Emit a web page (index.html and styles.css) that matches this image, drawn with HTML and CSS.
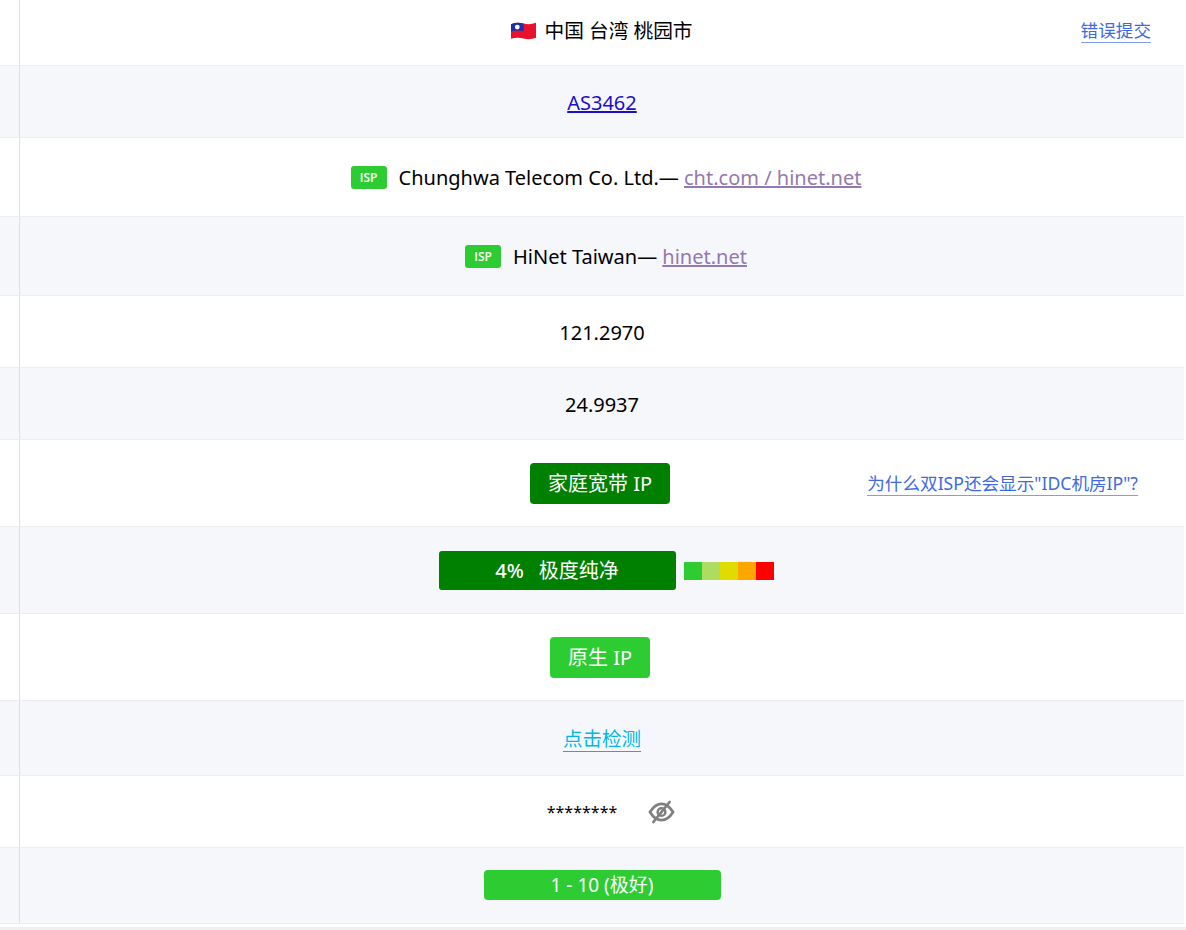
FILE: index.html
```html
<!DOCTYPE html>
<html lang="zh-CN">
<head>
<meta charset="utf-8">
<title>IP</title>
<link rel="stylesheet" href="styles.css">
</head>
<body>
<main class="table">
  <div class="row h-loc">
    <div class="label"></div>
    <div class="value lift">
      <svg class="flag" viewBox="0 0 24 18" aria-hidden="true">
        <path d="M0 2.5 C4 .8 8 .8 12 1.8 C16 2.8 20 2.6 24 1 V15.5 C20 17 16 17.2 12 16.2 C8 15.2 4 15.2 0 16.5Z" fill="#e8112d"/>
        <path d="M0 2.5 C4 .8 8 .8 12 1.8 V9.2 C8 8.4 4 8.4 0 9.5Z" fill="#1f2fa8"/>
        <circle cx="6" cy="5.2" r="2.3" fill="#fff"/>
      </svg>
      <span class="loc">中国 台湾 桃园市</span>
      <a class="side side-report" href="#">错误提交</a>
    </div>
  </div>
  <div class="row alt h-asn">
    <div class="label"></div>
    <div class="value drop"><a class="asn" href="#">AS3462</a></div>
  </div>
  <div class="row h-isp">
    <div class="label"></div>
    <div class="value shift"><span class="tag">ISP</span><span>Chunghwa Telecom Co. Ltd.— <a class="visited" href="#">cht.com / hinet.net</a></span></div>
  </div>
  <div class="row alt h-isp">
    <div class="label"></div>
    <div class="value shift"><span class="tag">ISP</span><span>HiNet Taiwan— <a class="visited" href="#">hinet.net</a></span></div>
  </div>
  <div class="row h-asn">
    <div class="label"></div>
    <div class="value drop">121.2970</div>
  </div>
  <div class="row alt h-asn">
    <div class="label"></div>
    <div class="value drop">24.9937</div>
  </div>
  <div class="row h-badge">
    <div class="label"></div>
    <div class="value nudge">
      <span class="badge dark">家庭宽带 IP</span>
      <a class="side side-why" href="#">为什么双ISP还会显示"IDC机房IP"?</a>
    </div>
  </div>
  <div class="row alt h-badge">
    <div class="label"></div>
    <div class="value shift">
      <span class="score"><b>4%</b><span>极度纯净</span></span>
      <span class="scale"><i class="s1"></i><i class="s2"></i><i class="s3"></i><i class="s4"></i><i class="s5"></i></span>
    </div>
  </div>
  <div class="row h-badge">
    <div class="label"></div>
    <div class="value nudge"><span class="badge light">原生 IP</span></div>
  </div>
  <div class="row alt h-check">
    <div class="label"></div>
    <div class="value"><a class="check" href="#">点击检测</a></div>
  </div>
  <div class="row h-asn">
    <div class="label"></div>
    <div class="value pad-eye">
      <span class="stars">********</span>
      <svg class="eye" viewBox="0 0 28 24" aria-hidden="true">
        <path d="M2 12 C6 5.5 10 3.5 14 3.5 C18 3.5 22 5.5 26 12 C22 18.5 18 20.5 14 20.5 C10 20.5 6 18.5 2 12Z" fill="none" stroke="#808080" stroke-width="2.8"/>
        <circle cx="14" cy="12" r="4" fill="none" stroke="#808080" stroke-width="2.6"/>
        <path d="M22.5 1.5 L5.5 22.5" stroke="#808080" stroke-width="2.6" stroke-linecap="round"/>
      </svg>
    </div>
  </div>
  <div class="row alt h-last">
    <div class="label"></div>
    <div class="value lift-one"><span class="rating">1 - 10 (极好)</span></div>
  </div>
</main>
<div class="foot"></div>
</body>
</html>
```

FILE: styles.css
```css
* { box-sizing: border-box; }
html, body { margin: 0; padding: 0; background: #fff; }
body {
  font-family: "Noto Sans", "Noto Sans CJK SC", sans-serif;
  font-size: 20px;
  color: #000;
  overflow: hidden;
}
.table { width: 1184px; }
.row {
  display: flex;
  border-bottom: 1px solid #ebedf0;
  background: #fff;
}
.row.alt { background: #f6f7fb; }
.label {
  flex: 0 0 20px;
  border-right: 1px solid #dcdfe3;
}
.value {
  flex: 1;
  position: relative;
  display: flex;
  align-items: center;
  justify-content: center;
  line-height: 28px;
}
.nudge { padding-right: 4px; }
.drop { padding-top: 2px; }
.lift { padding-bottom: 3px; }
.lift-one { padding-bottom: 2px; }
.shift { padding-left: 8px; padding-top: 1px; }
.pad-eye { padding-left: 18px; }
.h-loc { height: 66px; }
.h-asn { height: 72px; }
.h-isp { height: 79px; }
.h-badge { height: 87px; }
.h-check { height: 75px; }
.h-last { height: 76px; }
.flag { width: 25px; height: 20px; margin-right: 8px; }
.loc { font-size: 19.7px; }
.asn { color: #1a0dce; }
.visited { color: #9479ae; }
.side {
  position: absolute;
  text-decoration: none;
  color: #3d6ae0;
  border-bottom: 1px solid #7f9ee8;
  font-size: 17.6px;
  line-height: 24px;
}
.side-report { right: 33px; top: 18px; }
.side-why { right: 46px; top: 31px; }
.tag {
  background: #2ecc33;
  color: #fff;
  font-family: "Open Sans", sans-serif;
  font-size: 12px;
  font-weight: 600;
  line-height: 23px;
  width: 36px;
  text-align: center;
  border-radius: 3px;
  margin-right: 12px;
}
.badge {
  color: #fff;
  border-radius: 4px;
  line-height: 41px;
  padding: 0 18px;
  font-size: 20px;
}
.dark { background: #008000; }
.light { background: #2ecc33; }
.score {
  width: 237px;
  height: 39px;
  background: #008000;
  color: #fff;
  border-radius: 3px;
  display: flex;
  align-items: center;
  justify-content: center;
  gap: 15px;
  font-size: 20px;
}
.score b { font-weight: 500; }
.scale { display: flex; margin-left: 8px; }
.scale i { width: 18px; height: 18px; }
.s1 { background: #2ecc33; }
.s2 { background: #addc61; }
.s3 { background: #e0dc00; }
.s4 { background: #ffa500; }
.s5 { background: #ff0000; }
.check {
  display: block;
  color: #00b7e8;
  text-decoration: none;
  border-bottom: 1px solid #00b7e8;
  font-size: 19.5px;
  padding-top: 2px;
  line-height: 24px;
}
.stars { font-size: 16px; margin-right: 31px; }
.eye { width: 27px; height: 24px; }
.rating {
  width: 237px;
  line-height: 30px;
  background: #2ecc33;
  color: #fff;
  border-radius: 4px;
  text-align: center;
  font-size: 19px;
}
.foot { height: 3px; margin-top: 3px; background: #f0f0f0; }
```
